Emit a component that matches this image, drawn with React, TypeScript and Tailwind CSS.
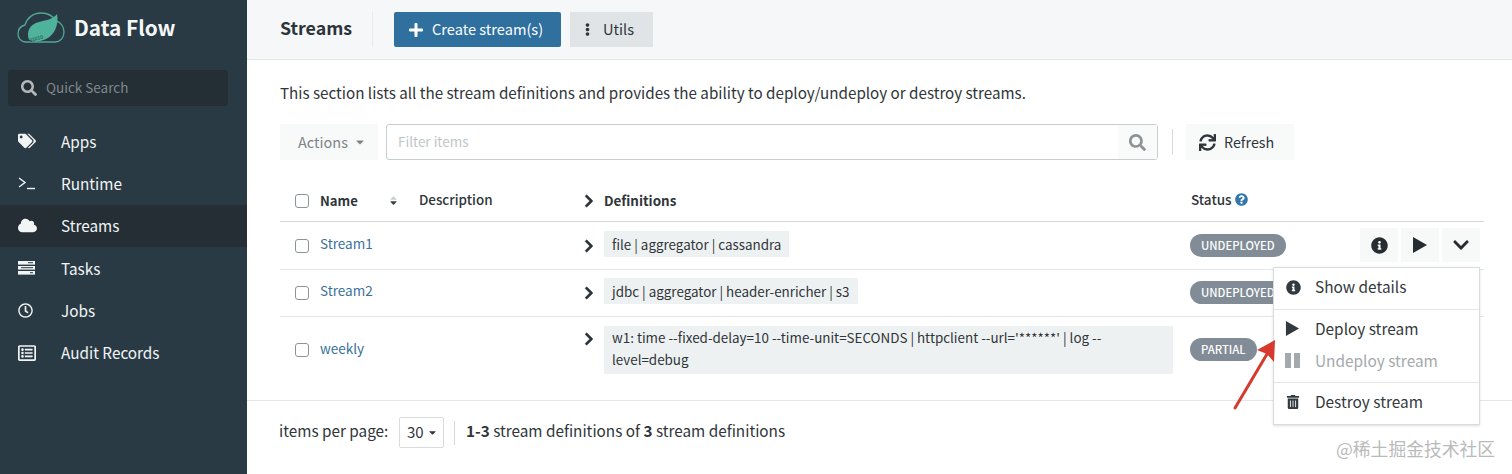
import { ReactNode } from "react"
import {
  FaTags, FaCloud, FaRegClock, FaRegListAlt, FaSearch, FaPlus, FaEllipsisV,
  FaSync, FaChevronRight, FaChevronDown, FaInfoCircle, FaTrashAlt, FaQuestionCircle,
  FaCaretDown, FaSortUp, FaSortDown,
} from "react-icons/fa"

const font = "[font-family:'Noto_Sans_CJK_SC','Noto_Sans',sans-serif]"

const Prompt = () => (
  <svg width="17" height="14" viewBox="0 0 17 14" fill="none" stroke="currentColor" strokeWidth="1.4">
    <path d="M1 2 L7 6.5 L1 11" />
    <path d="M9 12.5 H17" />
  </svg>
)

const Bars = () => (
  <svg width="17" height="14" viewBox="0 0 17 14" fill="currentColor">
    <rect y="0" width="17" height="3.6" />
    <rect y="5" width="17" height="3.6" />
    <rect y="10" width="17" height="3.6" />
    <rect x="10" y="1.2" width="5" height="1" fill="#2a3a44" />
    <rect x="3" y="6.2" width="12" height="1" fill="#2a3a44" />
    <rect x="12" y="11.2" width="3" height="1" fill="#2a3a44" />
  </svg>
)

const navItems = [
  { label: "Apps", icon: <FaTags size={18} /> },
  { label: "Runtime", icon: <Prompt /> },
  { label: "Streams", icon: <FaCloud size={19} />, active: true },
  { label: "Tasks", icon: <Bars /> },
  { label: "Jobs", icon: <FaRegClock size={15} /> },
  { label: "Audit Records", icon: <FaRegListAlt size={18} /> },
]

const Logo = () => (
  <svg width="48" height="34" viewBox="0 0 48 34" className="shrink-0">
    <path d="M9 31 C3 31 1 26 1 23 C1 18 4 15 8 14 C10 7 16 2 24 2 C31 2 36 5 39 10 C44 11 47 16 47 21 C47 27 43 31 38 31 Z" fill="none" stroke="#4fa893" strokeWidth="1.3" />
    <path d="M12 29 C9 20 13 13 22 11 C30 9 36 8 40 3 C42 13 38 24 29 28 C23 31 17 31 12 29 Z" fill="#4fb39b" />
    <text x="13" y="31" fontSize="5" fill="#1f3a3d" transform="rotate(-16 13 31)" fontFamily="Liberation Sans">01010</text>
  </svg>
)

const Play = ({ w, h }: { w: number; h: number }) => (
  <svg width={w} height={h} viewBox="0 0 14 16"><path d="M0 0 L14 8 L0 16 Z" fill="currentColor" /></svg>
)

const Sidebar = () => (
  <aside className="w-[247px] shrink-0 bg-[#2a3a44] text-[#f2f5f6]">
    <div className="h-[55px] pl-[17px] flex items-center gap-[9px]">
      <Logo />
      <span className="text-[20.8px] font-semibold text-[#f4f7f8] leading-none">Data Flow</span>
    </div>
    <div className="ml-[8px] mr-[19px] mt-[15px] h-[36px] rounded-[3px] bg-[#242f35] flex items-center pl-[13px] gap-[9px]">
      <FaSearch size={16} className="text-[#b3b9bb]" />
      <span className="text-[13.5px] text-[#7f888c] -mt-[2px]">Quick Search</span>
    </div>
    <nav className="mt-[14px]">
      {navItems.map((item) => (
        <div key={item.label} className={`h-[42.3px] flex items-center ${item.active ? "bg-[#242e34]" : ""}`}>
          <span className="w-[61px] pl-[18px] flex items-center">{item.icon}</span>
          <span className="text-[15.3px]">{item.label}</span>
        </div>
      ))}
    </nav>
  </aside>
)

const Checkbox = () => <span className="block w-[14px] h-[14px] rounded-[3px] border border-[#8c9498] bg-white" />

const Chevron = () => <FaChevronRight size={14} stroke="currentColor" strokeWidth={24} className="text-[#2b3238]" />

const Def = ({ children }: { children: ReactNode }) => (
  <span className="inline-block bg-[#eef1f1] px-[8px] py-[1px] text-[13.4px] leading-[24px] text-[#2f3539]">{children}</span>
)

const Badge = ({ children }: { children: ReactNode }) => (
  <span className="inline-flex h-[23px] items-center rounded-full bg-[#828c96] px-[11px] text-[11.3px] font-medium text-white">{children}</span>
)

const ActionBtn = ({ children }: { children: ReactNode }) => (
  <span className="h-[34px] w-[38px] flex items-center justify-center bg-[#f7f9f9] text-[#262c30]">{children}</span>
)

const rowGrid = "grid grid-cols-[40px_99px_161px_24px_586px_1fr] items-center"

const Row = ({ name, def, status, height, actions }: { name: string; def: ReactNode; status: string; height: string; actions?: boolean }) => (
  <div className={`${rowGrid} ${height} border-b border-[#e4e7e8]`}>
    <span className="pl-[15px]"><Checkbox /></span>
    <span className="text-[13.5px] text-[#39729b] -mt-[5px]">{name}</span>
    <span />
    <span className="pl-[2px]"><Chevron /></span>
    <span className="-mt-[4px]">{def}</span>
    <div className="flex items-center justify-between pr-[4px] -mt-[1px]">
      <Badge>{status}</Badge>
      {actions && (
        <div className="flex gap-[3px]">
          <ActionBtn><FaInfoCircle size={17} /></ActionBtn>
          <ActionBtn><Play w={14} h={16} /></ActionBtn>
          <ActionBtn><FaChevronDown size={18} /></ActionBtn>
        </div>
      )}
    </div>
  </div>
)

const Menu = () => (
  <div className="absolute left-[1273px] top-[267px] w-[207px] h-[158px] bg-white border border-[#d8dcdd] shadow-sm text-[15.4px] text-[#33393d]">
    <div className="h-[42px] flex items-center border-b border-[#e4e7e8] pb-[3px]">
      <span className="w-[41px] pl-[12px]"><FaInfoCircle size={15} /></span>Show details
    </div>
    <div className="h-[73px] flex flex-col justify-center border-b border-[#e4e7e8] pb-[3px]">
      <div className="h-[32px] flex items-center">
        <span className="w-[41px] pl-[11px]"><Play w={15} h={15} /></span>Deploy stream
      </div>
      <div className="h-[32px] flex items-center text-[#a4a9ac]">
        <span className="w-[41px] pl-[11px]">
          <svg width="15" height="15" viewBox="0 0 15 15" fill="currentColor">
            <rect width="6" height="15" />
            <rect x="9" width="6" height="15" />
          </svg>
        </span>
        Undeploy stream
      </div>
    </div>
    <div className="h-[40px] flex items-center pb-[3px]">
      <span className="w-[41px] pl-[12px]"><FaTrashAlt size={14} /></span>Destroy stream
    </div>
  </div>
)

export default function App() {
  return (
    <div className={`relative flex w-[1512px] h-[474px] overflow-hidden bg-white ${font}`}>
      <Sidebar />
      <main className="flex-1 min-w-0 flex flex-col">
        <header className="h-[60px] shrink-0 bg-[#f5f7f8] border-b border-[#e2e5e6] pl-[33px] flex items-center">
          <h1 className="w-[92px] text-[17.8px] font-semibold text-[#2c343a] -mt-[5px]">Streams</h1>
          <span className="w-px h-[35px] bg-[#e8ebec]" />
          <button className="ml-[21px] w-[167px] h-[35px] rounded-[2px] bg-[#30709f] text-white text-[14.6px] flex items-center pl-[14px] gap-[8px]">
            <FaPlus size={16} /><span className="-mt-[2px]">Create stream(s)</span>
          </button>
          <button className="ml-[9px] w-[83px] h-[35px] bg-[#e0e4e6] text-[#2f363a] text-[14.6px] flex items-center pl-[11px] gap-[9px]">
            <FaEllipsisV size={13} /><span className="-mt-[2px]">Utils</span>
          </button>
        </header>

        <section className="flex-1 min-h-0 pl-[33px] pr-[28px]">
          <p className="mt-[19px] h-[26px] text-[15.2px] leading-[26px] text-[#2f3539]">
            This section lists all the stream definitions and provides the ability to deploy/undeploy or destroy streams.
          </p>

          <div className="mt-[19px] flex items-center h-[36px]">
            <button className="w-[98px] h-full bg-[#f8fafa] text-[#7d8588] text-[14.5px] flex items-center pl-[18px] gap-[6px]">
              <span className="-mt-[1px]">Actions</span> <FaCaretDown size={12} />
            </button>
            <div className="ml-[8px] w-[772px] h-full rounded-[3px] border border-[#c9cdce] flex items-center">
              <span className="flex-1 pl-[11px] text-[13.5px] text-[#c0c5c7] -mt-[1px]">Filter items</span>
              <span className="w-[39px] h-full bg-[#f9fafa] flex items-center justify-center">
                <FaSearch size={17} className="text-[#8c9396]" />
              </span>
            </div>
            <span className="ml-[14px] w-px h-[26px] bg-[#d5d9da]" />
            <button className="ml-[13px] w-[108px] h-full bg-[#f8fafa] text-[#2f3539] text-[14.3px] flex items-center pl-[13px] gap-[8px]">
              <FaSync size={17} /><span className="-mt-[1px]">Refresh</span>
            </button>
          </div>

          <div className={`${rowGrid} mt-[20px] h-[42px] border-b border-[#d5d9da]`}>
            <span className="pl-[15px]"><Checkbox /></span>
            <span className="flex items-center justify-between pr-[22px] text-[13.1px] font-bold text-[#2f3539]">
              Name
              <span className="relative w-[9px] h-[10px] text-[11px]">
                <FaSortUp className="absolute left-0 top-0 text-[#ccd0d2]" />
                <FaSortDown className="absolute left-0 top-0 text-[#3a4145]" />
              </span>
            </span>
            <span className="text-[13.4px] font-medium text-[#2f3539] -mt-[2px]">Description</span>
            <span className="pl-[2px]"><Chevron /></span>
            <span className="text-[13.4px] font-bold text-[#2f3539]">Definitions</span>
            <span className="flex items-center gap-[3px] text-[13.5px] font-medium text-[#2f3539] -mt-[2px] pl-[1px]">
              Status <FaQuestionCircle size={13} className="text-[#2f77ad]" />
            </span>
          </div>

          <Row name="Stream1" status="UNDEPLOYED" height="h-[48px]" actions def={<Def>file | aggregator | cassandra</Def>} />
          <Row name="Stream2" status="UNDEPLOYED" height="h-[47px]" def={<Def>jdbc | aggregator | header-enricher | s3</Def>} />
          <div className={`${rowGrid} h-[65px]`}>
            <span className="pl-[15px]"><Checkbox /></span>
            <span className="text-[13.5px] text-[#39729b] -mt-[3px]">weekly</span>
            <span />
            <span className="pl-[2px] self-start mt-[15px]"><Chevron /></span>
            <span className="mt-[1px] w-[569px] h-[48px] bg-[#eef1f1] px-[8px] text-[13.4px] leading-[22px] text-[#2f3539]">
              w1: time --fixed-delay=10 --time-unit=SECONDS | httpclient --url='******' | log --<br />level=debug
            </span>
            <span className="-mt-[3px]"><Badge>PARTIAL</Badge></span>
          </div>
        </section>

        <footer className="h-[74px] shrink-0 border-t border-[#e4e7e8] pl-[32px] pb-[10px] flex items-center text-[15.3px] text-[#2f3539]">
          <span className="w-[120px] -mt-[5px]">items per page:</span>
          <span className="w-[45px] h-[31px] border border-[#d8dcdd] rounded-[2px] flex items-center pl-[7px] gap-[3px] text-[15px]">
            30 <FaCaretDown size={11} />
          </span>
          <span className="ml-[10px] w-px h-[24px] bg-[#d5d9da]" />
          <span className="ml-[11px] -mt-[4px]"><b className="font-bold">1-3</b> stream definitions of <b className="font-bold">3</b> stream definitions</span>
        </footer>
      </main>

      <Menu />

      <svg className="absolute left-[1228px] top-[335px]" width="54" height="78" viewBox="0 0 54 78">
        <path d="M7 73 L42 14" stroke="#d6392d" strokeWidth="3" strokeLinecap="round" fill="none" />
        <path d="M47 5 L46 27 L39 19 L29 15 Z" fill="#d6392d" />
      </svg>

      <span className="absolute left-[1336px] top-[436px] text-[17.8px] leading-[24px] text-[#b9baba]">@稀土掘金技术社区</span>
    </div>
  )
}
